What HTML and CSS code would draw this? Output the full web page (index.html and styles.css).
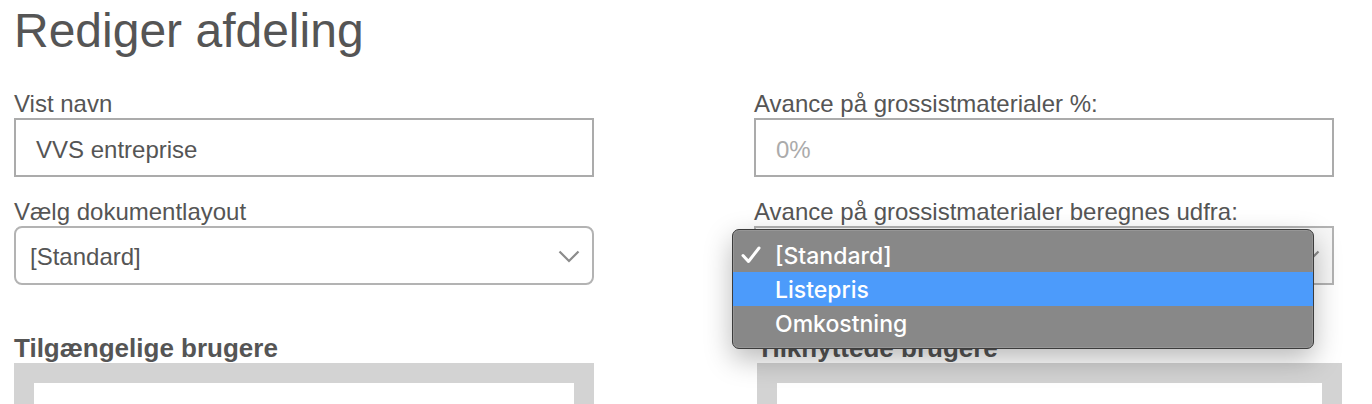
FILE: index.html
```html
<!DOCTYPE html>
<html lang="da">
<head>
<meta charset="utf-8">
<title>Rediger afdeling</title>
<link rel="stylesheet" href="styles.css">
</head>
<body>
<div class="page">
  <h1 class="title">Rediger afdeling</h1>
  <div class="grid">
    <div class="field">
      <label class="label">Vist navn</label>
      <div class="input">VVS entreprise</div>
    </div>
    <div class="field">
      <label class="label">Avance på grossistmaterialer %:</label>
      <div class="input placeholder">0%</div>
    </div>
    <div class="field">
      <label class="label">Vælg dokumentlayout</label>
      <div class="select rounded">
        <span>[Standard]</span>
        <svg class="chev" width="22" height="13" viewBox="0 0 22 13"><path d="M1.5 1.5 L11 11 L20.5 1.5" fill="none" stroke="#8c8c8c" stroke-width="2.2"/></svg>
      </div>
    </div>
    <div class="field">
      <label class="label">Avance på grossistmaterialer beregnes udfra:</label>
      <div class="select square">
        <span>[Standard]</span>
        <svg class="chev" width="22" height="13" viewBox="0 0 22 13"><path d="M1.5 1.5 L11 11 L20.5 1.5" fill="none" stroke="#8c8c8c" stroke-width="2.2"/></svg>
        <div class="menu">
          <div class="item checked">
            <svg class="check" width="20" height="18" viewBox="0 0 20 18"><path d="M2 9.5 L7.5 15.5 L18 2" fill="none" stroke="#fff" stroke-width="3" stroke-linecap="round" stroke-linejoin="round"/></svg>
            <span>[Standard]</span>
          </div>
          <div class="item active"><span>Listepris</span></div>
          <div class="item"><span>Omkostning</span></div>
        </div>
      </div>
    </div>
    <div class="list">
      <h2 class="list-title">Tilgængelige brugere</h2>
      <div class="list-box"><div class="list-inner"></div></div>
    </div>
    <div class="list right">
      <h2 class="list-title">Tilknyttede brugere</h2>
      <div class="list-box"><div class="list-inner"></div></div>
    </div>
  </div>
</div>
</body>
</html>
```

FILE: styles.css
```css
html, body {
  margin: 0;
  padding: 0;
  background: #ffffff;
  overflow: hidden;
}
body {
  font-family: "Liberation Sans", Arial, sans-serif;
  color: #555555;
}
.page {
  padding: 3px 0 0 14px;
}
.title {
  margin: 0;
  font-size: 48px;
  line-height: 55px;
  font-weight: normal;
  color: #555555;
}
.grid {
  display: grid;
  grid-template-columns: 580px 580px;
  column-gap: 160px;
  margin-top: 32px;
}
.field {
  display: flex;
  flex-direction: column;
  margin-bottom: 21px;
}
.label {
  font-size: 24px;
  line-height: 28px;
  color: #555555;
}
.input {
  box-sizing: border-box;
  height: 59px;
  border: 2px solid #ababab;
  padding: 4px 20px 0;
  display: flex;
  align-items: center;
  font-size: 24px;
  color: #555555;
}
.input.placeholder {
  color: #ababab;
}
.select {
  position: relative;
  box-sizing: border-box;
  height: 59px;
  border: 2px solid #b3b3b3;
  padding: 2px 12px 0 14px;
  display: flex;
  align-items: center;
  justify-content: space-between;
  font-size: 24px;
  color: #555555;
}
.select.rounded {
  border-radius: 8px;
}
.select.square {
  border-radius: 0;
  background: #f7f7f7;
}
.chev {
  display: block;
}
.menu {
  position: absolute;
  left: -24px;
  top: 1px;
  width: 582px;
  box-sizing: border-box;
  padding: 8px 0 8px;
  background: #888888;
  border: 1px solid #3c3c3c;
  border-radius: 7px;
  box-shadow: 0 10px 28px rgba(0, 0, 0, 0.28), inset 0 0 0 1px rgba(255,255,255,0.12);
  font-family: "Inter", "Liberation Sans", sans-serif;
  font-weight: 500;
  font-size: 23px;
  color: #ffffff;
  z-index: 5;
}
.item {
  position: relative;
  box-sizing: border-box;
  height: 34px;
  display: flex;
  align-items: center;
  padding-left: 42px;
  padding-top: 1px;
}
.item.active {
  background: #4c9bfb;
}
.check {
  position: absolute;
  left: 8px;
  top: 8px;
}
.list {
  display: flex;
  flex-direction: column;
  padding-top: 27px;
}
.list.right {
  margin-left: 3px;
  margin-right: -8px;
}
.list-title {
  margin: 0;
  font-size: 26px;
  line-height: 30px;
  font-weight: bold;
  color: #555555;
}
.list-box {
  background: #d3d3d3;
  padding: 20px 20px 0 20px;
  height: 60px;
}
.list-inner {
  background: #ffffff;
  height: 100%;
}
```
